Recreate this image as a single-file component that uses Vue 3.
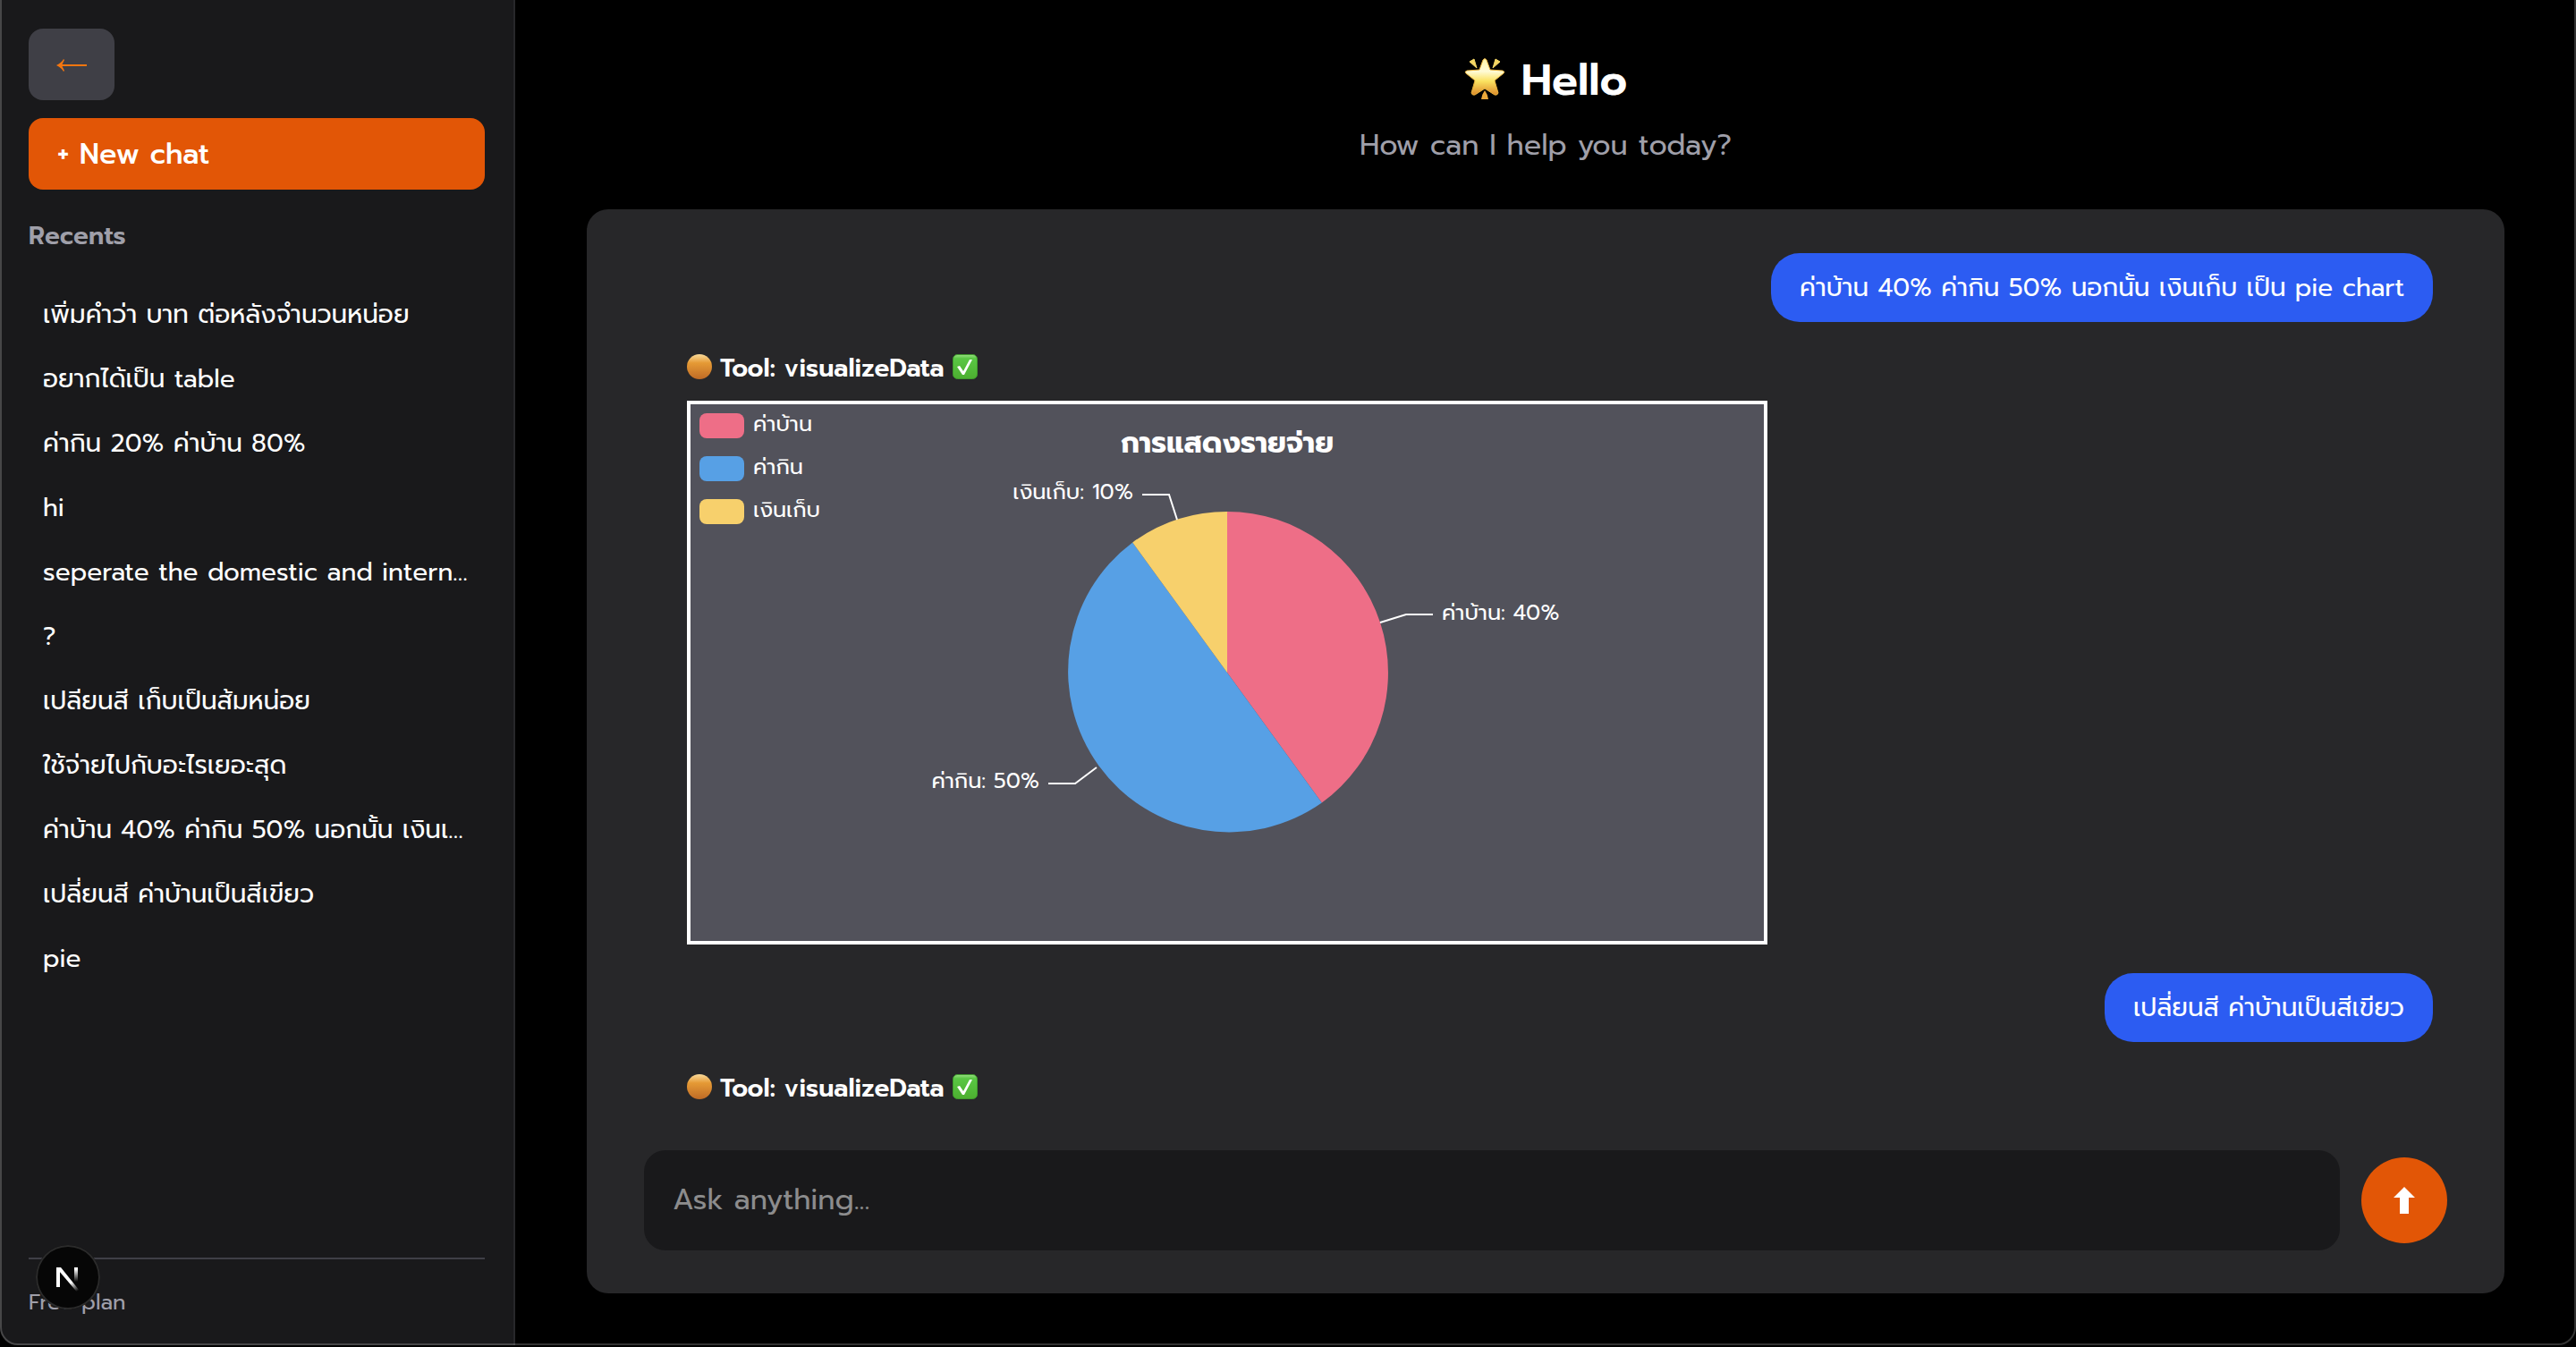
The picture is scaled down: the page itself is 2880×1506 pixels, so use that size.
<script setup>
import { ref } from 'vue'

const draft = ref('')

const recents = [
  'เพิ่มคำว่า บาท ต่อหลังจำนวนหน่อย',
  'อยากได้เป็น table',
  'ค่ากิน 20% ค่าบ้าน 80%',
  'hi',
  'seperate the domestic and intern…',
  '?',
  'เปลียนสี เก็บเป็นส้มหน่อย',
  'ใช้จ่ายไปกับอะไรเยอะสุด',
  'ค่าบ้าน 40% ค่ากิน 50% นอกนั้น เงินเ…',
  'เปลี่ยนสี ค่าบ้านเป็นสีเขียว',
  'pie',
]

const messages = [
  { role: 'user', text: 'ค่าบ้าน 40% ค่ากิน 50% นอกนั้น เงินเก็บ เป็น pie chart' },
  { role: 'tool', name: 'visualizeData', chart: true },
  { role: 'user', text: 'เปลี่ยนสี ค่าบ้านเป็นสีเขียว' },
  { role: 'tool', name: 'visualizeData', chart: false },
]

const legend = [
  { name: 'ค่าบ้าน', color: '#ee6e87' },
  { name: 'ค่ากิน', color: '#57a0e5' },
  { name: 'เงินเก็บ', color: '#f7d06c' },
]
</script>

<template>
  <div class="app">
    <aside class="sidebar">
      <button class="back" type="button" aria-label="Collapse sidebar">
        <svg width="34" height="16" viewBox="0 0 34 16" aria-hidden="true">
          <path d="M3 9H34" fill="none" stroke="#f4760f" stroke-width="2" />
          <path d="M0 9Q6 6 8 2L9 3Q7 7 6 9Q7 11 9 15L8 16Q6 12 0 9Z" fill="#f4760f" />
        </svg>
      </button>
      <button class="new-chat" type="button">+ New chat</button>
      <h2 class="recents-title">Recents</h2>
      <nav class="recents">
        <a v-for="item in recents" :key="item" href="#" class="recent">{{ item }}</a>
      </nav>
      <footer class="plan">Free plan</footer>
      <button class="dev-badge" type="button" aria-label="Open dev tools">
        <svg width="72" height="72" viewBox="0 0 72 72" aria-hidden="true">
          <defs>
            <linearGradient id="stem" x1="0" y1="27" x2="0" y2="41" gradientUnits="userSpaceOnUse">
              <stop offset="0" stop-color="#fff" />
              <stop offset="1" stop-color="#fff" stop-opacity="0" />
            </linearGradient>
            <linearGradient id="slash" x1="39" y1="42" x2="46" y2="52" gradientUnits="userSpaceOnUse">
              <stop offset="0" stop-color="#fff" />
              <stop offset="1" stop-color="#fff" stop-opacity="0" />
            </linearGradient>
          </defs>
          <path d="M23 25H27V47H23Z" fill="#fff" />
          <path d="M23 25H28L48.5 50.5L46 52.5L26 29Z" fill="url(#slash)" />
          <path d="M43 25H47V42H43Z" fill="url(#stem)" />
        </svg>
      </button>
    </aside>

    <main class="main">
      <header class="hero">
        <h1 class="hello">
          <svg width="46" height="48" viewBox="1 0 46 48" aria-hidden="true">
            <defs>
              <linearGradient id="gold" x1="0" y1="0" x2="0" y2="1">
                <stop offset="0" stop-color="#fff6a8" />
                <stop offset="0.35" stop-color="#fffbd6" />
                <stop offset="0.62" stop-color="#fbe260" />
                <stop offset="1" stop-color="#dd8a2a" />
              </linearGradient>
            </defs>
            <path d="M26 3L30 14L44 15Q47 16 45 18L35 26L39 40Q38 43 35 42L24 35L13 42Q10 43 9 40L13 26L3 18Q1 16 4 15L18 14L22 3Q24 0 26 3Z" fill="url(#gold)" stroke="#e9b23c" stroke-width="1" stroke-linejoin="round" />
            <path d="M7 5L12 2L15 12ZM41 5L36 2L33 12Z" fill="#f5d765" stroke="#f5d765" stroke-width="1" stroke-linejoin="round" />
            <path d="M24 37Q27 41 28 47H20Q21 41 24 37Z" fill="#eca93a" />
          </svg>
          Hello
        </h1>
        <p class="subtitle">How can I help you today?</p>
      </header>

      <section class="card">
        <div class="messages">
          <template v-for="(m, i) in messages" :key="i">
            <p v-if="m.role === 'user'" class="bubble">{{ m.text }}</p>
            <article v-else class="tool">
              <h3 class="tool-title">
                <svg width="28" height="28" viewBox="0 0 28 28" aria-hidden="true">
                  <defs>
                    <linearGradient id="amber" x1="0" y1="0" x2="0" y2="1">
                      <stop offset="0" stop-color="#fadb9c" />
                      <stop offset="0.35" stop-color="#e59a35" />
                      <stop offset="1" stop-color="#bf6a25" />
                    </linearGradient>
                  </defs>
                  <circle cx="14" cy="14" r="14" fill="url(#amber)" />
                </svg>
                <span>Tool: {{ m.name }}</span>
                <svg width="28" height="28" viewBox="0 0 28 28" aria-hidden="true">
                  <defs>
                    <linearGradient id="leaf" x1="0" y1="0" x2="0" y2="1">
                      <stop offset="0" stop-color="#9be085" />
                      <stop offset="0.16" stop-color="#5ac744" />
                      <stop offset="1" stop-color="#4caf30" />
                    </linearGradient>
                  </defs>
                  <rect x="0.5" y="0.5" width="27" height="27" rx="5" fill="url(#leaf)" stroke="#3f9a2c" />
                  <path d="M5 14L8 13L12 19L19 6L22 6L13 23H11Z" fill="#fff" />
                </svg>
              </h3>
              <figure v-if="m.chart" class="chart">
                <ul class="legend">
                  <li v-for="l in legend" :key="l.name">
                    <i class="swatch" :style="{ background: l.color }"></i>{{ l.name }}
                  </li>
                </ul>
                <svg class="pie" viewBox="0 0 1200 600" role="img" aria-label="การแสดงรายจ่าย">
                  <path d="M600 300V120A180 180 0 0 1 705.8 445.6Z" fill="#ee6e87" />
                  <path d="M600 300L705.8 445.6A180 180 0 0 1 494.2 154.4Z" fill="#57a0e5" />
                  <path d="M600 300L494.2 154.4A180 180 0 0 1 600 120Z" fill="#f7d06c" />
                  <g fill="none" stroke="#fff" stroke-width="2">
                    <path d="M771 244L800 235H830" />
                    <path d="M454 406L430 424H400" />
                    <path d="M544 129L535 101H505" />
                  </g>
                  <text class="chart-title" x="600" y="54" text-anchor="middle">การแสดงรายจ่าย</text>
                  <text class="label" x="840" y="241">ค่าบ้าน: 40%</text>
                  <text class="label" x="390" y="429" text-anchor="end">ค่ากิน: 50%</text>
                  <text class="label" x="495" y="106" text-anchor="end">เงินเก็บ: 10%</text>
                </svg>
              </figure>
            </article>
          </template>
        </div>
        <form class="composer" @submit.prevent>
          <input v-model="draft" class="ask" type="text" placeholder="Ask anything..." aria-label="Ask anything" />
          <button class="send" type="submit" aria-label="Send">
            <svg width="24" height="30" viewBox="0 0 24 30" aria-hidden="true">
              <path d="M12 0L24 12H17V30H7V12H0Z" fill="#fff" />
            </svg>
          </button>
        </form>
      </section>
    </main>
  </div>
</template>

<style>
body {
  margin: 0;
  background: #000;
}
</style>

<style scoped>
* {
  box-sizing: border-box;
}

.app {
  position: relative;
  display: flex;
  height: 100vh;
  overflow: hidden;
  background: #000;
  color: #fff;
  font-family: Prompt, 'Noto Sans', 'Noto Sans Thai', sans-serif;
  font-size: 28px;
  line-height: 40px;
}

/* hairline frame round the window */
.app::after {
  content: '';
  position: absolute;
  inset: -24px 0 2px;
  border: 2px solid rgba(255, 255, 255, 0.2);
  border-radius: 20px;
  box-shadow: 0 0 0 20px #000;
  pointer-events: none;
}

button {
  border: 0;
  padding: 0;
  font: inherit;
  color: inherit;
  cursor: pointer;
}

h1,
h2,
h3,
p,
ul,
figure {
  margin: 0;
  padding: 0;
}

.sidebar {
  position: relative;
  display: flex;
  flex: none;
  flex-direction: column;
  width: 576px;
  padding: 32px 32px 34px;
  background: #19191b;
  border-right: 2px solid #27272a;
}

.back {
  display: grid;
  place-items: center;
  width: 96px;
  height: 80px;
  border-radius: 16px;
  background: #3f3f46;
}

.new-chat {
  height: 80px;
  margin-top: 20px;
  padding: 2px 32px 0;
  border-radius: 16px;
  background: #e25606;
  font-size: 32px;
  font-weight: 500;
  text-align: left;
}

.recents-title {
  margin-top: 32px;
  color: #9f9fa9;
  font-size: 28px;
  font-weight: 600;
}

.recents {
  display: flex;
  flex: 1;
  flex-direction: column;
  margin-top: 32px;
}

.recent {
  padding: 16px;
  color: #fff;
  text-decoration: none;
  white-space: nowrap;
}

.plan {
  padding-top: 32px;
  border-top: 2px solid #3f3f46;
  color: #9f9fa9;
  font-size: 24px;
  line-height: 32px;
}

.dev-badge {
  position: absolute;
  bottom: 42px;
  left: 40px;
  width: 72px;
  height: 72px;
  border-radius: 50%;
  background: #060606;
  box-shadow: inset 0 0 0 2px #2b2b2b;
}

.main {
  display: flex;
  flex: 1;
  flex-direction: column;
  min-width: 0;
  padding: 56px 80px 60px;
}

.hero {
  text-align: center;
  padding-bottom: 48px;
}

.hello {
  display: flex;
  align-items: center;
  justify-content: center;
  gap: 18px;
  font-size: 48px;
  font-weight: 600;
  line-height: 68px;
}

.hello svg,
.tool-title svg {
  margin-bottom: 4px;
}

.subtitle {
  margin-top: 16px;
  color: #9f9fa9;
  font-size: 32px;
  line-height: 46px;
}

.card {
  display: flex;
  flex: 1;
  flex-direction: column;
  min-height: 0;
  border-radius: 24px;
  background: #272729;
}

.messages {
  display: flex;
  flex: 1;
  flex-direction: column;
  gap: 32px;
  min-height: 0;
  padding: 49px 80px 0 112px;
  overflow: hidden;
}

.bubble {
  flex: none;
  align-self: flex-end;
  padding: 16px 32px;
  border-radius: 32px;
  background: #2c5cf2;
  line-height: 45px;
}

.tool {
  flex: none;
}

.tool-title {
  display: flex;
  align-items: center;
  gap: 9px;
  font-size: 28px;
  font-weight: 600;
}

.chart {
  position: relative;
  width: 100%;
  max-width: 1208px;
  margin-top: 16px;
  border: 4px solid #fff;
  background: #52525b;
}

.pie {
  display: block;
  width: 100%;
}

.legend {
  position: absolute;
  top: 6px;
  left: 10px;
  display: flex;
  flex-direction: column;
  gap: 16px;
  font-size: 24px;
  line-height: 32px;
  list-style: none;
}

.legend li {
  display: flex;
  align-items: flex-end;
  gap: 10px;
}

.swatch {
  width: 50px;
  height: 28px;
  border-radius: 8px;
}

.chart-title {
  fill: #fff;
  font-size: 32px;
  font-weight: 700;
}

.label {
  fill: #fff;
  font-size: 24px;
}

.composer {
  display: flex;
  align-items: center;
  gap: 24px;
  padding: 24px 64px 48px;
}

.ask {
  flex: 1;
  min-width: 0;
  height: 112px;
  padding: 0 32px 2px;
  border: 0;
  border-radius: 24px;
  outline: 0;
  background: #19191b;
  color: #fff;
  font: inherit;
  font-size: 32px;
}

.ask::placeholder {
  color: #8c8c8d;
  opacity: 1;
}

.send {
  display: grid;
  place-items: center;
  width: 96px;
  height: 96px;
  border-radius: 50%;
  background: #e25606;
}
</style>
